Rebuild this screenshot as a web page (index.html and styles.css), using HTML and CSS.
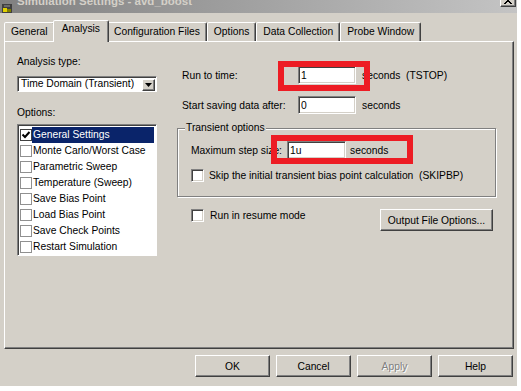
FILE: index.html
```html
<!DOCTYPE html>
<html lang="en">
<head>
  <meta charset="UTF-8" />
  <title>Simulation Settings - avd_boost</title>
  <link rel="stylesheet" href="styles.css">
</head>
<body>
  <div class="window">
    <div class="titlebar">
      <svg class="appicon" width="10" height="9" viewBox="0 0 10 9">
        <rect x="0" y="0" width="10" height="9" fill="#404040"/>
        <rect x="1" y="4" width="4" height="4" fill="#e0d000"/>
        <rect x="5" y="5" width="4" height="3" fill="#808000"/>
        <rect x="2" y="1" width="6" height="2" fill="#6a6a6a"/>
      </svg>
      <span class="caption">Simulation Settings - avd_boost</span>
      <span class="closebtn">
        <svg width="8" height="7" viewBox="0 0 8 7"><path d="M0 0 L7 7 M1 0 L8 7 M7 0 L0 7 M8 0 L1 7" stroke="#000" stroke-width="1"/></svg>
      </span>
    </div>

    <ul class="tabs">
      <li class="tab">General</li>
      <li class="tab active">Analysis</li>
      <li class="tab">Configuration Files</li>
      <li class="tab">Options</li>
      <li class="tab">Data Collection</li>
      <li class="tab">Probe Window</li>
    </ul>

    <div class="panel">
      <div class="leftcol">
        <div class="label">Analysis type:</div>
        <div class="combo">
          <span class="combo-text">Time Domain (Transient)</span>
          <span class="dropbtn">
            <svg width="7" height="4" viewBox="0 0 7 4"><path d="M0 0 H7 L3.5 4 Z" fill="#000"/></svg>
          </span>
        </div>
        <div class="label options-label">Options:</div>
        <ul class="listbox">
          <li class="selected">
            <span class="lcheck checked">
              <svg width="10" height="10" viewBox="0 0 10 10"><path d="M1.5 4.5 L4 7 L8.5 2" fill="none" stroke="#000" stroke-width="2"/></svg>
            </span>
            <span class="item">General Settings</span>
          </li>
          <li><span class="lcheck"></span><span class="item">Monte Carlo/Worst Case</span></li>
          <li><span class="lcheck"></span><span class="item">Parametric Sweep</span></li>
          <li><span class="lcheck"></span><span class="item">Temperature (Sweep)</span></li>
          <li><span class="lcheck"></span><span class="item">Save Bias Point</span></li>
          <li><span class="lcheck"></span><span class="item">Load Bias Point</span></li>
          <li><span class="lcheck"></span><span class="item">Save Check Points</span></li>
          <li><span class="lcheck"></span><span class="item">Restart Simulation</span></li>
        </ul>
      </div>

      <div class="rightcol">
        <div class="row">
          <span class="lbl">Run to time:</span>
          <input class="field" type="text" value="1">
          <span class="unit">seconds&nbsp; (TSTOP)</span>
        </div>
        <div class="row row-gap">
          <span class="lbl">Start saving data after:</span>
          <input class="field" type="text" value="0">
          <span class="unit">seconds</span>
        </div>

        <div class="group">
          <span class="legend">Transient options</span>
          <div class="row">
            <span class="lbl lbl-step">Maximum step size:</span>
            <input class="field field-step" type="text" value="1u">
            <span class="unit unit-step">seconds</span>
          </div>
          <label class="chk chk-skip">
            <span class="box"></span>
            <span>Skip the initial transient bias point calculation&nbsp; (SKIPBP)</span>
          </label>
        </div>

        <div class="resume-row">
          <label class="chk">
            <span class="box"></span>
            <span class="resume-text">Run in resume mode</span>
          </label>
          <button class="btn btn-output">Output File Options...</button>
        </div>
      </div>
    </div>

    <div class="buttons">
      <button class="btn">OK</button>
      <button class="btn">Cancel</button>
      <button class="btn disabled">Apply</button>
      <button class="btn">Help</button>
    </div>

    <!-- red annotation boxes -->
    <div class="mark mark-run"></div>
    <div class="mark mark-step"></div>
  </div>
</body>
</html>
```

FILE: styles.css
```css
body {
  margin: 0;
  background: #fff;
  font-family: "Liberation Sans", Arial, sans-serif;
  font-size: 10.3px;
  color: #000;
}
ul {
  list-style: none;
  margin: 0;
  padding: 0;
}
.window {
  position: relative;
  width: 517px;
  height: 386px;
  background: #d4d0c8;
}

/* title bar, cut at the top */
.titlebar {
  height: 13px;
  display: flex;
  align-items: flex-start;
  overflow: hidden;
  background: linear-gradient(to right, #808080, #c4c4c4);
}
.appicon {
  flex: none;
  margin: 4px 0 0 2px;
}
.caption {
  margin: -5px 0 0 5px;
  font-size: 11.5px;
  font-weight: bold;
  line-height: 13px;
  color: #d4d0c8;
  white-space: nowrap;
}
.closebtn {
  margin: -7px 1px 0 auto;
  width: 16px;
  height: 14px;
  box-sizing: border-box;
  background: #d4d0c8;
  border: 1px solid;
  border-color: #fff #404040 #404040 #fff;
  box-shadow: inset -1px -1px #808080;
  display: flex;
  align-items: center;
  justify-content: center;
}

/* tabs */
.tabs {
  position: relative;
  z-index: 1;
  display: flex;
  align-items: flex-end;
  height: 21px;
  margin-top: 7px;
  padding-left: 4px;
}
.tab {
  height: 18px;
  padding: 0 6px;
  line-height: 18px;
  border: 1px solid;
  border-bottom: none;
  border-color: #fff #404040 transparent #fff;
  border-radius: 2px 2px 0 0;
  box-shadow: inset -1px 0 #808080;
  background: #d4d0c8;
  white-space: nowrap;
}
.tab.active {
  height: 21px;
  margin: 0 -2px -1px;
  padding: 0 8px;
  line-height: 16px;
  position: relative;
}

/* tab page */
.panel {
  box-sizing: border-box;
  height: 308px;
  margin: 0 3px 0 4px;
  padding: 13px 0 0 12px;
  display: flex;
  gap: 20px;
  border: 1px solid;
  border-color: #fff #404040 #404040 #fff;
  box-shadow: inset -1px -1px #808080;
}
.leftcol {
  width: 140px;
  flex: none;
}
.label {
  line-height: 13px;
}
.options-label {
  margin-top: 14px;
}
.combo {
  box-sizing: border-box;
  height: 16px;
  margin-top: 8px;
  display: flex;
  align-items: center;
  background: #fff;
  border: 1px solid;
  border-color: #808080 #fff #fff #808080;
  box-shadow: inset 1px 1px #404040;
  padding: 0 1px 0 3px;
}
.combo-text {
  flex: 1;
  line-height: 12px;
  white-space: nowrap;
}
.dropbtn {
  box-sizing: border-box;
  width: 13px;
  height: 12px;
  margin-top: 1px;
  display: flex;
  align-items: center;
  justify-content: center;
  background: #d4d0c8;
  border: 1px solid;
  border-color: #fff #404040 #404040 #fff;
  box-shadow: inset -1px -1px #808080;
}
.listbox {
  box-sizing: border-box;
  height: 132px;
  margin-top: 5px;
  padding: 2px 2px 2px 2px;
  background: #fff;
  border: 1px solid;
  border-color: #808080 #fff #fff #808080;
  box-shadow: inset 1px 1px #404040;
}
.listbox li {
  display: flex;
  align-items: center;
  height: 16px;
}
.lcheck {
  box-sizing: border-box;
  flex: none;
  width: 12px;
  height: 12px;
  border: 1px solid #909090;
  background: #fff;
  display: flex;
  align-items: center;
  justify-content: center;
}
.lcheck.checked {
  border-color: #404040;
}
.item {
  flex: 1;
  height: 16px;
  line-height: 16px;
  padding-left: 1px;
  white-space: nowrap;
}
.selected .item {
  background: #0a246a;
  color: #fff;
}

/* right side */
.rightcol {
  width: 319px;
  flex: none;
  padding-top: 11px;
}
.row {
  display: flex;
  align-items: center;
  height: 18px;
  padding-left: 5px;
}
.row-gap {
  margin-top: 12px;
}
.lbl {
  width: 116px;
  flex: none;
  white-space: nowrap;
}
.field {
  box-sizing: border-box;
  width: 58px;
  height: 18px;
  margin: 0;
  padding: 0 2px;
  font: inherit;
  color: #000;
  background: #fff;
  border: 1px solid;
  border-color: #808080 #fff #fff #808080;
  box-shadow: inset 1px 1px #404040, inset -1px -1px #d4d0c8;
  outline: none;
}
.unit {
  margin-left: 6px;
  white-space: pre;
}
.group {
  position: relative;
  box-sizing: border-box;
  height: 69px;
  margin-top: 14px;
  padding: 12px 0 0 8px;
  border: 1px solid #808080;
  box-shadow: inset 1px 1px #fff, 1px 1px #fff;
}
.legend {
  position: absolute;
  top: -8px;
  left: 7px;
  padding: 0 1px;
  line-height: 13px;
  background: #d4d0c8;
}
.lbl-step {
  width: 96px;
}
.field-step {
  width: 59px;
}
.unit-step {
  margin-left: 4px;
}
.chk {
  display: flex;
  align-items: flex-start;
  line-height: 13px;
  white-space: nowrap;
}
.chk-skip {
  margin: 10px 0 0 5px;
}
.box {
  box-sizing: border-box;
  flex: none;
  width: 13px;
  height: 13px;
  margin-right: 5px;
  background: #fff;
  border: 1px solid;
  border-color: #808080 #fff #fff #808080;
  box-shadow: inset 1px 1px #404040, inset -1px -1px #d4d0c8;
}
.resume-row {
  display: flex;
  align-items: flex-start;
  margin-top: 12px;
  padding: 0 3px 0 14px;
}
.resume-text {
  margin-left: 1px;
}
.btn {
  box-sizing: border-box;
  width: 75px;
  height: 22px;
  margin: 0;
  padding: 0;
  font: inherit;
  color: #000;
  background: #d4d0c8;
  border: 1px solid;
  border-color: #fff #404040 #404040 #fff;
  box-shadow: inset -1px -1px #808080;
}
.btn-output {
  width: 113px;
  margin-left: auto;
}
.btn.disabled {
  color: #808080;
  text-shadow: 1px 1px #fff;
}
.buttons {
  display: flex;
  justify-content: flex-end;
  gap: 6px;
  margin-top: 6px;
  padding-right: 4px;
}

/* annotation */
.mark {
  position: absolute;
  box-sizing: border-box;
  border: 6px solid #ed1c24;
}
.mark-run {
  left: 278px;
  top: 61px;
  width: 92px;
  height: 30px;
}
.mark-step {
  left: 271px;
  top: 135px;
  width: 142px;
  height: 29px;
}
```
